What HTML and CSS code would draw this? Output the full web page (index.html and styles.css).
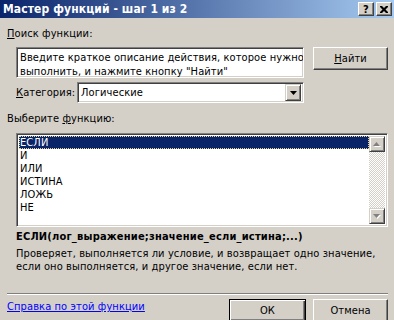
FILE: index.html
```html
<!DOCTYPE html>
<html lang="ru">
<head>
	<meta charset="utf-8">
	<link rel="stylesheet" href="styles.css">
</head>
<body>
	<div class="dialog">
		<div class="titlebar">
			<span class="title">Мастер функций - шаг 1 из 2</span>
			<div class="caption-btns">
				<span class="cap-btn cap-help">?</span>
				<span class="cap-btn cap-close">
					<svg width="8" height="7" viewBox="0 0 8 7">
						<path d="M0 0h2l2 2 2-2h2v1l-2.5 2.5 2.5 2.5v1h-2l-2-2-2 2h-2v-1l2.5-2.5-2.5-2.5z" fill="#000"/>
					</svg>
				</span>
			</div>
		</div>

		<div class="content">
			<div class="label label-search"><u>П</u>оиск функции:</div>
			<div class="search-row">
				<div class="field search-box">Введите краткое описание действия, которое нужно<br>выполнить, и нажмите кнопку "Найти"</div>
				<span class="btn"><u>Н</u>айти</span>
			</div>

			<div class="category-row">
				<span class="cat-label"><u>К</u>атегория:</span>
				<div class="field combo">
					<span class="combo-text">Логические</span>
					<span class="combo-btn">
						<svg width="7" height="4" viewBox="0 0 7 4"><path d="M0 0h7l-3.5 4z" fill="#000"/></svg>
					</span>
				</div>
			</div>

			<div class="label label-list">Выберите <u>ф</u>ункцию:</div>
			<div class="field list">
				<ul class="items">
					<li class="selected">ЕСЛИ</li>
					<li>И</li>
					<li>ИЛИ</li>
					<li>ИСТИНА</li>
					<li>ЛОЖЬ</li>
					<li>НЕ</li>
				</ul>
				<div class="scrollbar">
					<span class="sb-btn">
						<svg width="8" height="5" viewBox="0 0 8 5"><path d="M4.5 1l3.5 4h-7z" fill="#fff"/><path d="M3.5 0l3.5 4h-7z" fill="#808080"/></svg>
					</span>
					<span class="sb-track"></span>
					<span class="sb-btn">
						<svg width="8" height="5" viewBox="0 0 8 5"><path d="M1 1h7l-3.5 4z" fill="#fff"/><path d="M0 0h7l-3.5 4z" fill="#808080"/></svg>
					</span>
				</div>
			</div>

			<div class="signature">ЕСЛИ(лог_выражение;значение_если_истина;...)</div>
			<div class="desc">Проверяет, выполняется ли условие, и возвращает одно значение,<br>если оно выполняется, и другое значение, если нет.</div>
		</div>

		<div class="separator"></div>

		<div class="footer">
			<a class="help-link" href="#">Справка по этой функции</a>
			<span class="btn btn-default">ОК</span>
			<span class="btn">Отмена</span>
		</div>
	</div>
</body>
</html>
```

FILE: styles.css
```css
body {
	margin: 0;
	background: #d4d0c8;
	color: #000;
	font: 11px/13px "DejaVu Sans Condensed", "DejaVu Sans", sans-serif;
	font-stretch: condensed;
	letter-spacing: 0.1px;
}
.dialog {
	width: 394px;
	height: 320px;
	overflow: hidden;
}
.titlebar {
	display: flex;
	align-items: center;
	height: 18px;
	padding: 0 2px 0 3px;
	background: linear-gradient(to right, #0a246a, #a6caf0);
}
.title {
	flex: 1;
	color: #fff;
	font-weight: bold;
	font-size: 12px;
	letter-spacing: 0.1px;
}
.caption-btns {
	display: flex;
	gap: 2px;
}
.cap-btn {
	display: flex;
	align-items: center;
	justify-content: center;
	width: 14px;
	height: 12px;
	background: #d4d0c8;
	border: 1px solid;
	border-color: #fff #404040 #404040 #fff;
	box-shadow: inset -1px -1px #808080;
	font-weight: bold;
	font-size: 11px;
}
.content {
	padding: 9px 6px 0 7px;
}
.label-list {
	margin-top: 9px;
}
.search-row {
	display: flex;
	align-items: flex-start;
	gap: 9px;
	margin: 7px 0 0 9px;
}
.field {
	box-sizing: border-box;
	background: #fff;
	border: 1px solid;
	border-color: #808080 #fff #fff #808080;
	box-shadow: inset 1px 1px #404040, inset -1px -1px #d4d0c8;
}
.search-box {
	width: 288px;
	height: 31px;
	padding: 3px 3px;
	line-height: 14px;
	white-space: nowrap;
	overflow: hidden;
}
.btn {
	box-sizing: border-box;
	display: flex;
	align-items: center;
	justify-content: center;
	width: 75px;
	height: 23px;
	background: #d4d0c8;
	border: 1px solid;
	border-color: #fff #404040 #404040 #fff;
	box-shadow: inset -1px -1px #808080;
}
.btn-default {
	width: 77px;
	border-color: #000;
	box-shadow: inset 1px 1px #fff, inset -1px -1px #404040, inset -2px -2px #808080;
}
.category-row {
	display: flex;
	align-items: center;
	margin: 4px 0 0 9px;
}
.cat-label {
	width: 61px;
}
.combo {
	display: flex;
	align-items: center;
	width: 227px;
	height: 21px;
	padding: 2px;
}
.combo-text {
	flex: 1;
	padding-left: 1px;
}
.combo-btn {
	box-sizing: border-box;
	display: flex;
	align-items: center;
	justify-content: center;
	width: 16px;
	height: 17px;
	background: #d4d0c8;
	border: 1px solid;
	border-color: #d4d0c8 #404040 #404040 #d4d0c8;
	box-shadow: inset 1px 1px #fff, inset -1px -1px #808080;
}
.list {
	display: flex;
	width: 372px;
	height: 94px;
	margin: 8px 0 0 9px;
	padding: 2px;
}
.items {
	flex: 1;
	margin: 0;
	padding: 0;
	list-style: none;
}
.items li {
	height: 13px;
	padding-left: 1px;
}
.items .selected {
	background: #0a246a;
	color: #fff;
	outline: 1px dotted #e8d48a;
	outline-offset: -1px;
}
.scrollbar {
	display: flex;
	flex-direction: column;
	width: 16px;
}
.sb-btn {
	box-sizing: border-box;
	display: flex;
	align-items: center;
	justify-content: center;
	height: 16px;
	background: #d4d0c8;
	border: 1px solid;
	border-color: #d4d0c8 #404040 #404040 #d4d0c8;
	box-shadow: inset 1px 1px #fff, inset -1px -1px #808080;
}
.sb-track {
	flex: 1;
	background: repeating-conic-gradient(#fff 0 25%, #d4d0c8 0 50%) 0 0 / 2px 2px;
}
.signature {
	margin: 3px 0 0 9px;
	font-weight: bold;
	letter-spacing: 0.2px;
}
.desc {
	margin: 4px 0 0 9px;
}
.separator {
	width: 381px;
	height: 1px;
	margin: 20px 0 0 7px;
	background: #808080;
	border-bottom: 1px solid #fff;
}
.footer {
	display: flex;
	align-items: flex-start;
	gap: 7px;
	margin: 4px 0 0 7px;
	width: 381px;
}
.help-link {
	margin-top: 1px;
	margin-right: auto;
	color: #00f;
}
```
